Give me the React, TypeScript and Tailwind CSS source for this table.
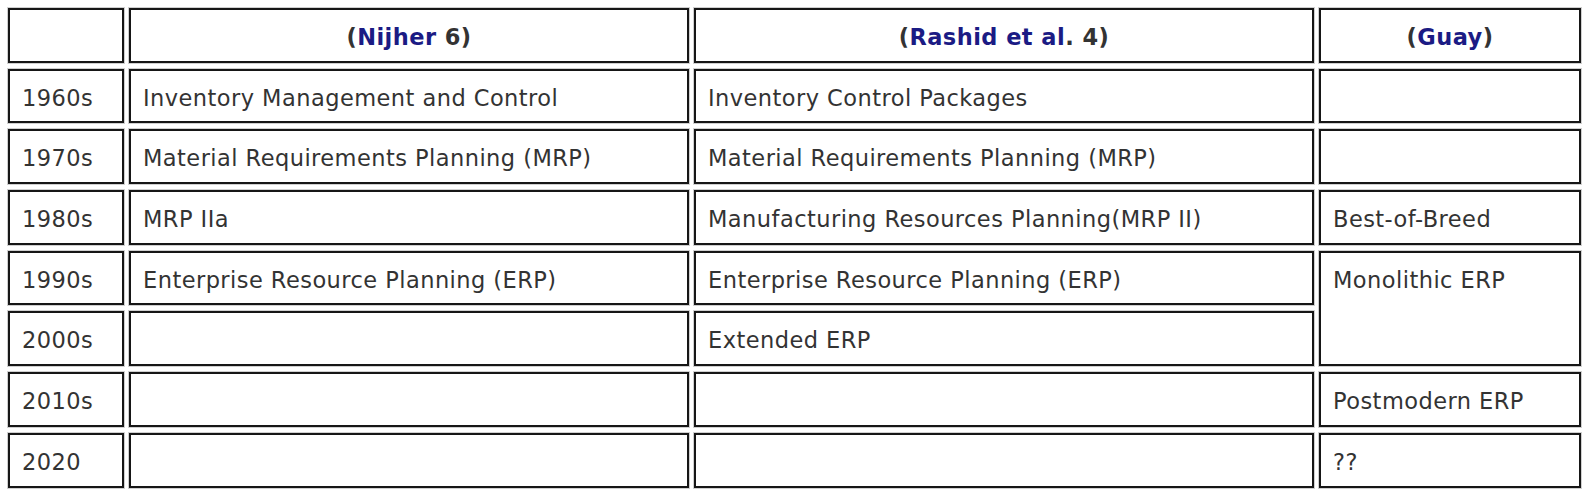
import React from "react";

type Cell = { text?: React.ReactNode; rowSpan?: boolean };

const Blue = ({ children }: { children: React.ReactNode }) => (
  <span className="text-[#1b1b84]">{children}</span>
);

const rows: { year: string; cells: (Cell | null)[] }[] = [
  { year: "1960s", cells: [{ text: "Inventory Management and Control" }, { text: "Inventory Control Packages" }, {}] },
  { year: "1970s", cells: [{ text: "Material Requirements Planning (MRP)" }, { text: "Material Requirements Planning (MRP)" }, {}] },
  { year: "1980s", cells: [{ text: "MRP IIa" }, { text: "Manufacturing Resources Planning(MRP II)" }, { text: "Best-of-Breed" }] },
  { year: "1990s", cells: [{ text: "Enterprise Resource Planning (ERP)" }, { text: "Enterprise Resource Planning (ERP)" }, { text: "Monolithic ERP", rowSpan: true }] },
  { year: "2000s", cells: [{}, { text: "Extended ERP" }, null] },
  { year: "2010s", cells: [{}, {}, { text: "Postmodern ERP" }] },
  { year: "2020", cells: [{}, {}, { text: "??" }] },
];

const cellBase =
  "border-2 border-[#161616] shadow-[0_0_0_1px_#cfcfcf] bg-white px-3 pt-[12px] leading-[1.4] text-[#333333] whitespace-nowrap tracking-[0.45px]";

const App = () => {
  return (
    <div className="min-h-screen bg-white p-2 font-['DejaVu_Sans',Verdana,sans-serif] text-[22.5px]">
      <div className="grid grid-cols-[116px_560px_620px_262px] auto-rows-[54.7px] gap-x-[5px] gap-y-[6px]">
        <div className={cellBase} />
        <div className={`${cellBase} text-center font-bold`}>
          (<Blue>Nijher</Blue> 6)
        </div>
        <div className={`${cellBase} text-center font-bold`}>
          (<Blue>Rashid et al</Blue>. 4)
        </div>
        <div className={`${cellBase} text-center font-bold`}>
          (<Blue>Guay</Blue>)
        </div>
        {rows.map((r) => (
          <React.Fragment key={r.year}>
            <div className={cellBase}>{r.year}</div>
            {r.cells.map((c, i) =>
              c === null ? null : (
                <div key={i} className={`${cellBase} ${c.rowSpan ? "row-span-2" : ""}`}>
                  {c.text}
                </div>
              )
            )}
          </React.Fragment>
        ))}
      </div>
    </div>
  );
};

export default App;
